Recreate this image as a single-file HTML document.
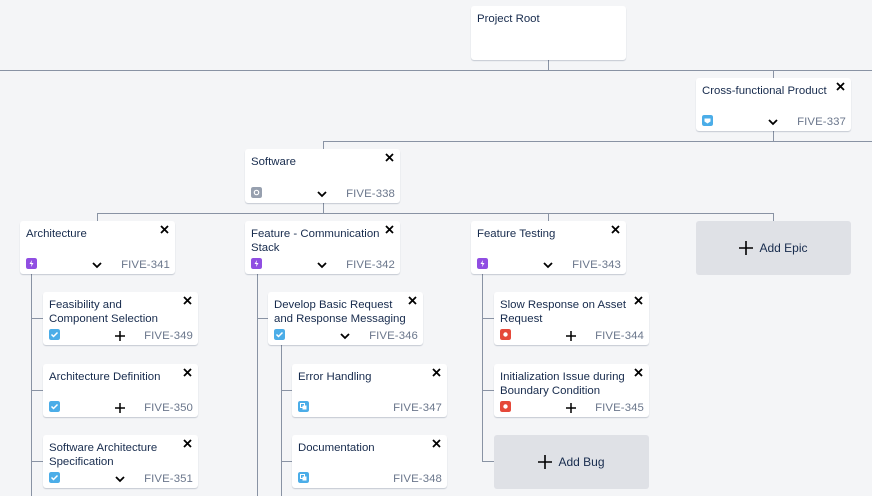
<!DOCTYPE html>
<html><head><meta charset="utf-8"><style>
*{margin:0;padding:0;box-sizing:border-box}
body{width:872px;height:496px;background:#f4f5f7;position:relative;overflow:hidden;font-family:"Liberation Sans",Arial,sans-serif;color:#172b4d}
.l{position:absolute;background:#8993a4}
.h{height:1px}.v{width:1px}
.c{position:absolute;width:155px;height:53px;background:#fff;border-radius:3px;box-shadow:0 1px 1px rgba(9,30,66,.2)}
.t{position:absolute;left:6px;top:7px;width:140px;font-size:11.4px;line-height:13.5px;white-space:normal}
.x{position:absolute;right:6px;top:4px;width:9px;height:9px}
.i{position:absolute;left:6px;bottom:5px;width:11px;height:11px;border-radius:2px}
.id{position:absolute;right:5px;bottom:3px;font-size:11.4px;color:#6b778c;letter-spacing:.1px}
.m{position:absolute;left:72px;bottom:4px;width:10px;height:10px}
.add{position:absolute;width:155px;height:54px;background:#dfe1e6;border-radius:3px;font-size:12px;display:flex;align-items:center;justify-content:center}
.add svg{margin-right:6px}
</style></head><body>
<div class="l h" style="left:0;top:70px;width:872px"></div>
<div class="l v" style="left:548px;top:60px;height:10px"></div>
<div class="l v" style="left:773px;top:70px;height:8px"></div>
<div class="l v" style="left:773px;top:131px;height:10px"></div>
<div class="l h" style="left:323px;top:141px;width:549px"></div>
<div class="l v" style="left:323px;top:141px;height:8px"></div>
<div class="l v" style="left:323px;top:203px;height:10px"></div>
<div class="l h" style="left:97px;top:213px;width:677px"></div>
<div class="l v" style="left:97px;top:213px;height:8px"></div>
<div class="l v" style="left:548px;top:213px;height:8px"></div>
<div class="l v" style="left:773px;top:213px;height:8px"></div>
<div class="l v" style="left:31px;top:274px;height:222px"></div>
<div class="l h" style="left:31px;top:318px;width:12px"></div>
<div class="l h" style="left:31px;top:390px;width:12px"></div>
<div class="l h" style="left:31px;top:461px;width:12px"></div>
<div class="l v" style="left:257px;top:274px;height:222px"></div>
<div class="l h" style="left:257px;top:318px;width:11px"></div>
<div class="l v" style="left:281px;top:345px;height:151px"></div>
<div class="l h" style="left:281px;top:390px;width:11px"></div>
<div class="l h" style="left:281px;top:461px;width:11px"></div>
<div class="l v" style="left:482px;top:274px;height:188px"></div>
<div class="l h" style="left:482px;top:318px;width:12px"></div>
<div class="l h" style="left:482px;top:390px;width:12px"></div>
<div class="l h" style="left:482px;top:461px;width:12px"></div>

<svg width="0" height="0" style="position:absolute">
<defs>
<symbol id="X" viewBox="0 0 9 9"><path d="M1 1L8 8M8 1L1 8" stroke="#000" stroke-width="1.8"/></symbol>
<symbol id="CH" viewBox="0 0 10 10"><path d="M1 3L5 7L9 3" stroke="#000" stroke-width="1.8" fill="none"/></symbol>
<symbol id="PL" viewBox="0 0 10 10"><path d="M5 0V10M0 5H10" stroke="#000" stroke-width="1.5"/></symbol>
<symbol id="EP" viewBox="0 0 11 11"><rect width="11" height="11" rx="2" fill="#904ee2"/><path d="M6 2L3.5 6H5.5L5 9L7.5 5H5.5Z" fill="#fff"/></symbol>
<symbol id="ST" viewBox="0 0 11 11"><rect width="11" height="11" rx="2" fill="#4bade8"/><path d="M2.5 5.5L4.5 7.5L8.5 3.5" stroke="#fff" stroke-width="1.5" fill="none"/></symbol>
<symbol id="BG" viewBox="0 0 11 11"><rect width="11" height="11" rx="2" fill="#e5493a"/><circle cx="5.5" cy="5.5" r="2.2" fill="#fff"/></symbol>
<symbol id="SB" viewBox="0 0 11 11"><rect width="11" height="11" rx="2" fill="#4bade8"/><rect x="2.5" y="2.5" width="4" height="4" fill="none" stroke="#fff"/><rect x="4.5" y="4.5" width="4" height="4" fill="#fff"/></symbol>
<symbol id="GR" viewBox="0 0 11 11"><rect width="11" height="11" rx="2" fill="#97a0af"/><circle cx="5.5" cy="5.5" r="2.2" fill="none" stroke="#fff" stroke-width="1.2"/></symbol>
<symbol id="CF" viewBox="0 0 11 11"><rect width="11" height="11" rx="2" fill="#4bade8"/><path d="M2.5 3.5H8.5V6.5L5.5 8.5L2.5 6.5Z" fill="#fff"/></symbol>
</defs></svg>

<div class="c" style="left:471px;top:6px;height:54px"><div class="t">Project Root</div></div>

<div class="c" style="left:696px;top:78px"><div class="t">Cross-functional Product</div><svg class="x"><use href="#X"/></svg><svg class="i"><use href="#CF"/></svg><svg class="m"><use href="#CH"/></svg><div class="id">FIVE-337</div></div>

<div class="c" style="left:245px;top:149px;height:54px"><div class="t">Software</div><svg class="x"><use href="#X"/></svg><svg class="i"><use href="#GR"/></svg><svg class="m"><use href="#CH"/></svg><div class="id">FIVE-338</div></div>

<div class="c" style="left:20px;top:221px"><div class="t">Architecture</div><svg class="x"><use href="#X"/></svg><svg class="i"><use href="#EP"/></svg><svg class="m"><use href="#CH"/></svg><div class="id">FIVE-341</div></div>
<div class="c" style="left:245px;top:221px"><div class="t">Feature - Communication<br>Stack</div><svg class="x"><use href="#X"/></svg><svg class="i"><use href="#EP"/></svg><svg class="m"><use href="#CH"/></svg><div class="id">FIVE-342</div></div>
<div class="c" style="left:471px;top:221px"><div class="t">Feature Testing</div><svg class="x"><use href="#X"/></svg><svg class="i"><use href="#EP"/></svg><svg class="m"><use href="#CH"/></svg><div class="id">FIVE-343</div></div>
<div class="add" style="left:696px;top:221px"><svg width="14" height="14" viewBox="0 0 14 14"><path d="M7 0V14M0 7H14" stroke="#000" stroke-width="1.6"/></svg>Add Epic</div>

<div class="c" style="left:43px;top:292px"><div class="t">Feasibility and<br>Component Selection</div><svg class="x"><use href="#X"/></svg><svg class="i"><use href="#ST"/></svg><svg class="m"><use href="#PL"/></svg><div class="id">FIVE-349</div></div>
<div class="c" style="left:43px;top:364px"><div class="t">Architecture Definition</div><svg class="x"><use href="#X"/></svg><svg class="i"><use href="#ST"/></svg><svg class="m"><use href="#PL"/></svg><div class="id">FIVE-350</div></div>
<div class="c" style="left:43px;top:435px"><div class="t">Software Architecture<br>Specification</div><svg class="x"><use href="#X"/></svg><svg class="i"><use href="#ST"/></svg><svg class="m"><use href="#CH"/></svg><div class="id">FIVE-351</div></div>

<div class="c" style="left:268px;top:292px"><div class="t">Develop Basic Request<br>and Response Messaging</div><svg class="x"><use href="#X"/></svg><svg class="i"><use href="#ST"/></svg><svg class="m"><use href="#CH"/></svg><div class="id">FIVE-346</div></div>
<div class="c" style="left:292px;top:364px"><div class="t">Error Handling</div><svg class="x"><use href="#X"/></svg><svg class="i"><use href="#SB"/></svg><div class="id">FIVE-347</div></div>
<div class="c" style="left:292px;top:435px"><div class="t">Documentation</div><svg class="x"><use href="#X"/></svg><svg class="i"><use href="#SB"/></svg><div class="id">FIVE-348</div></div>

<div class="c" style="left:494px;top:292px"><div class="t">Slow Response on Asset<br>Request</div><svg class="x"><use href="#X"/></svg><svg class="i"><use href="#BG"/></svg><svg class="m"><use href="#PL"/></svg><div class="id">FIVE-344</div></div>
<div class="c" style="left:494px;top:364px"><div class="t">Initialization Issue during<br>Boundary Condition</div><svg class="x"><use href="#X"/></svg><svg class="i"><use href="#BG"/></svg><svg class="m"><use href="#PL"/></svg><div class="id">FIVE-345</div></div>
<div class="add" style="left:494px;top:435px"><svg width="14" height="14" viewBox="0 0 14 14"><path d="M7 0V14M0 7H14" stroke="#000" stroke-width="1.6"/></svg>Add Bug</div>
</body></html>
